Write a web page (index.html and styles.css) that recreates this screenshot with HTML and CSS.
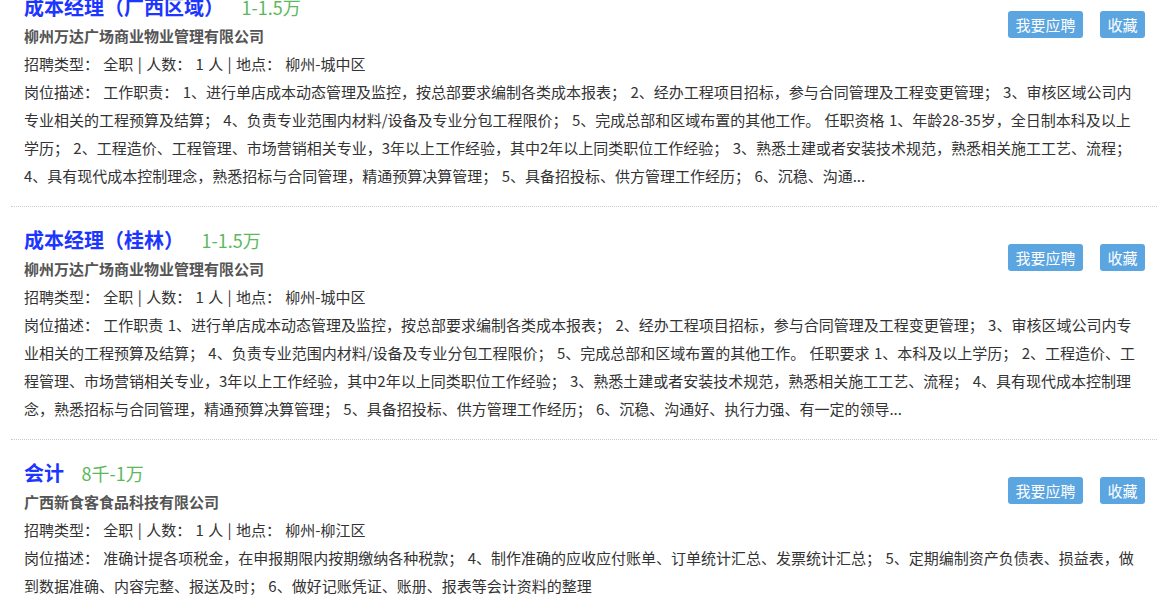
FILE: index.html
```html
<!DOCTYPE html>
<html lang="zh-CN">
<head>
  <meta charset="UTF-8">
  <title>招聘信息</title>
  <meta name="viewport" content="width=device-width, initial-scale=1.0">
  <link rel="stylesheet" href="styles.css">
</head>
<body>
  <ul class="job-list">
    <li class="job-item">
      <div class="job-actions">
        <a href="#" class="btn">我要应聘</a>
        <a href="#" class="btn">收藏</a>
      </div>
      <div class="job-title">
        <a href="#" class="job-name">成本经理（广西区域）</a>
        <span class="job-salary">1-1.5万</span>
      </div>
      <div class="job-company">柳州万达广场商业物业管理有限公司</div>
      <div class="job-meta">招聘类型： 全职 | 人数： 1 人 | 地点： 柳州-城中区</div>
      <div class="job-desc">岗位描述： 工作职责： 1、进行单店成本动态管理及监控，按总部要求编制各类成本报表； 2、经办工程项目招标，参与合同管理及工程变更管理； 3、审核区域公司内专业相关的工程预算及结算； 4、负责专业范围内材料/设备及专业分包工程限价； 5、完成总部和区域布置的其他工作。 任职资格 1、年龄28-35岁，全日制本科及以上学历； 2、工程造价、工程管理、市场营销相关专业，3年以上工作经验，其中2年以上同类职位工作经验； 3、熟悉土建或者安装技术规范，熟悉相关施工工艺、流程； 4、具有现代成本控制理念，熟悉招标与合同管理，精通预算决算管理； 5、具备招投标、供方管理工作经历； 6、沉稳、沟通...</div>
    </li>
    <li class="job-item">
      <div class="job-actions">
        <a href="#" class="btn">我要应聘</a>
        <a href="#" class="btn">收藏</a>
      </div>
      <div class="job-title">
        <a href="#" class="job-name">成本经理（桂林）</a>
        <span class="job-salary">1-1.5万</span>
      </div>
      <div class="job-company">柳州万达广场商业物业管理有限公司</div>
      <div class="job-meta">招聘类型： 全职 | 人数： 1 人 | 地点： 柳州-城中区</div>
      <div class="job-desc">岗位描述： 工作职责 1、进行单店成本动态管理及监控，按总部要求编制各类成本报表； 2、经办工程项目招标，参与合同管理及工程变更管理； 3、审核区域公司内专业相关的工程预算及结算； 4、负责专业范围内材料/设备及专业分包工程限价； 5、完成总部和区域布置的其他工作。 任职要求 1、本科及以上学历； 2、工程造价、工程管理、市场营销相关专业，3年以上工作经验，其中2年以上同类职位工作经验； 3、熟悉土建或者安装技术规范，熟悉相关施工工艺、流程； 4、具有现代成本控制理念，熟悉招标与合同管理，精通预算决算管理； 5、具备招投标、供方管理工作经历； 6、沉稳、沟通好、执行力强、有一定的领导...</div>
    </li>
    <li class="job-item">
      <div class="job-actions">
        <a href="#" class="btn">我要应聘</a>
        <a href="#" class="btn">收藏</a>
      </div>
      <div class="job-title">
        <a href="#" class="job-name">会计</a>
        <span class="job-salary">8千-1万</span>
      </div>
      <div class="job-company">广西新食客食品科技有限公司</div>
      <div class="job-meta">招聘类型： 全职 | 人数： 1 人 | 地点： 柳州-柳江区</div>
      <div class="job-desc">岗位描述： 准确计提各项税金，在申报期限内按期缴纳各种税款； 4、制作准确的应收应付账单、订单统计汇总、发票统计汇总； 5、定期编制资产负债表、损益表，做到数据准确、内容完整、报送及时； 6、做好记账凭证、账册、报表等会计资料的整理</div>
    </li>
  </ul>
</body>
</html>
```

FILE: styles.css
```css
* {
  margin: 0;
  padding: 0;
  box-sizing: border-box;
  font-family: "Noto Sans CJK SC", "Noto Sans", sans-serif;
}
body {
  background: #fff;
  color: #333;
  font-size: 15px;
  overflow: hidden;
}
a {
  text-decoration: none;
}
/* list is scrolled a little, first title is cut at the top */
.job-list {
  list-style: none;
  margin: -26px 0 0 11px;
}
.job-item {
  padding: 18px 12px 16px 13px;
  border-bottom: 1px dotted #ccc;
}
.job-actions {
  float: right;
  display: flex;
  gap: 17px;
  margin-top: 19px;
}
.btn {
  display: block;
  height: 27px;
  line-height: 27px;
  padding: 0 7.5px;
  background: #5ba5e1;
  color: #fff;
  border-radius: 3px;
  font-size: 15px;
}
.job-title {
  font-size: 20px;
  line-height: 30px;
}
.job-name {
  font-weight: bold;
  color: #1c36ff;
  line-height: 1;
}
.job-salary {
  font-size: 18px;
  color: #5cb85c;
  margin-left: 13px;
  line-height: 1;
}
.job-company {
  line-height: 28px;
  font-weight: bold;
  color: #555;
}
.job-meta,
.job-desc {
  line-height: 28px;
  color: #333;
  word-spacing: 1px;
}
```
